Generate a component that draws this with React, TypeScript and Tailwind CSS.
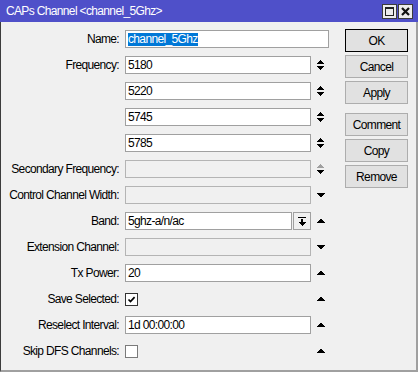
import React from "react";

type ArrowKind = "both" | "bothDis" | "up" | "down" | "none";

function Arrow({ kind }: { kind: ArrowKind }) {
  if (kind === "none") return null;
  return (
    <svg width="9" height="10" viewBox="0 0 9 10" shapeRendering="crispEdges">
      {kind === "both" && (
        <>
          <polygon points="0,4 4.5,0 9,4" fill="#000" />
          <polygon points="0,6 9,6 4.5,10" fill="#000" />
        </>
      )}
      {kind === "bothDis" && (
        <>
          <polygon points="0,4 4.5,0 9,4" fill="#a0a0a0" />
          <polygon points="0,6 9,6 4.5,10" fill="#000" />
        </>
      )}
      {kind === "up" && <polygon points="0,7 4.5,2.5 9,7" fill="#000" />}
      {kind === "down" && <polygon points="0,3 9,3 4.5,7.5" fill="#000" />}
    </svg>
  );
}

function TextBox({
  value,
  disabled,
  width = "w-[186px]",
  selected,
}: {
  value?: string;
  disabled?: boolean;
  width?: string;
  selected?: boolean;
}) {
  return (
    <div
      className={`${width} h-[18px] border flex items-center pl-[2px] leading-none whitespace-nowrap ${
        disabled ? "bg-[#f0f0f0] border-[#b4b4b4]" : "bg-white border-[#a0a0a0]"
      }`}
    >
      {selected ? (
        <span className="bg-[#0078d7] text-white h-[13px] flex items-center">{value}</span>
      ) : (
        <span>{value}</span>
      )}
    </div>
  );
}

function CheckBox({ checked, dark }: { checked?: boolean; dark?: boolean }) {
  return (
    <div
      className={`w-[13px] h-[13px] bg-white border flex items-center justify-center ${
        dark ? "border-[#333333]" : "border-[#7a7a7a]"
      }`}
    >
      {checked && (
        <svg width="9" height="9" viewBox="0 0 9 9">
          <path d="M1.5 4.5 L3.5 6.6 L7.6 2.2" stroke="#000" strokeWidth="1.7" fill="none" />
        </svg>
      )}
    </div>
  );
}

function Row({
  label,
  children,
  arrow = "none",
}: {
  label: string;
  children: React.ReactNode;
  arrow?: ArrowKind;
}) {
  return (
    <div className="h-[26px] flex items-center">
      <div className="w-[118px] text-right whitespace-nowrap">{label}</div>
      <div className="ml-[6px] flex items-center">{children}</div>
      {arrow !== "none" && (
        <div className="ml-[5px] w-[9px] h-[10px] flex">
          <Arrow kind={arrow} />
        </div>
      )}
    </div>
  );
}

function Btn({ label, def, className = "" }: { label: string; def?: boolean; className?: string }) {
  return (
    <div
      className={`w-[63px] h-[23px] flex items-center justify-center border bg-[#e1e1e1] ${
        def ? "border-[#000000]" : "border-[#adadad]"
      } ${className}`}
    >
      {label}
    </div>
  );
}

export default function App() {
  return (
    <div className="w-[418px] h-[372px] flex flex-col bg-[#f0f0f0] font-['Liberation_Sans',Arial,sans-serif] text-[12px] tracking-[-0.65px] text-black overflow-hidden">
      <div className="h-[22px] shrink-0 bg-[#4f50c9] flex items-center pl-[6px] pr-[5px] text-white">
        <span className="flex-1 leading-none whitespace-nowrap">CAPs Channel &lt;channel_5Ghz&gt;</span>
        <div className="flex gap-[1px]">
          <div className="w-[15px] h-[15px] bg-[#ececec] border border-[#3c3c3c] flex items-center justify-center">
            <div className="w-[9px] h-[9px] border border-[#222] border-t-2" />
          </div>
          <div className="w-[15px] h-[15px] bg-[#ececec] border border-[#3c3c3c] flex items-center justify-center">
            <svg width="9" height="9" viewBox="0 0 9 9">
              <path d="M1 1 L8 8 M8 1 L1 8" stroke="#111" strokeWidth="2.2" />
            </svg>
          </div>
        </div>
      </div>
      <div className="flex-1 flex border-l border-l-[#3c3c3c] border-r-2 border-r-[#a0a0a0] border-b-2 border-b-[#a0a0a0]">
        <div className="w-[344px] pt-[4px] flex flex-col">
          <Row label="Name:">
            <TextBox value="channel_5Ghz" width="w-[204px]" selected />
          </Row>
          <Row label="Frequency:" arrow="both">
            <TextBox value="5180" />
          </Row>
          <Row label="" arrow="both">
            <TextBox value="5220" />
          </Row>
          <Row label="" arrow="both">
            <TextBox value="5745" />
          </Row>
          <Row label="" arrow="both">
            <TextBox value="5785" />
          </Row>
          <Row label="Secondary Frequency:" arrow="bothDis">
            <TextBox disabled />
          </Row>
          <Row label="Control Channel Width:" arrow="down">
            <TextBox disabled />
          </Row>
          <Row label="Band:" arrow="up">
            <div className="flex w-[186px]">
              <TextBox value="5ghz-a/n/ac" width="w-[167px]" />
              <div className="ml-[1px] w-[18px] h-[18px] border border-[#a0a0a0] bg-[#f0f0f0] flex items-center justify-center">
                <svg width="8" height="9" viewBox="0 0 8 9" shapeRendering="crispEdges">
                  <rect x="0" y="0" width="8" height="1" fill="#000" />
                  <rect x="3" y="2" width="2" height="3" fill="#000" />
                  <polygon points="0,5 8,5 4,9" fill="#000" />
                </svg>
              </div>
            </div>
          </Row>
          <Row label="Extension Channel:" arrow="down">
            <TextBox disabled />
          </Row>
          <Row label="Tx Power:" arrow="up">
            <TextBox value="20" />
          </Row>
          <Row label="Save Selected:" arrow="up">
            <div className="w-[186px] flex">
              <CheckBox checked dark />
            </div>
          </Row>
          <Row label="Reselect Interval:" arrow="up">
            <TextBox value="1d 00:00:00" />
          </Row>
          <Row label="Skip DFS Channels:" arrow="up">
            <div className="w-[186px] flex">
              <CheckBox />
            </div>
          </Row>
        </div>
        <div className="w-[63px] pt-[7px] flex flex-col">
          <Btn label="OK" def />
          <Btn label="Cancel" className="mt-[3px]" />
          <Btn label="Apply" className="mt-[3px]" />
          <Btn label="Comment" className="mt-[9px]" />
          <Btn label="Copy" className="mt-[3px]" />
          <Btn label="Remove" className="mt-[3px]" />
        </div>
      </div>
    </div>
  );
}
